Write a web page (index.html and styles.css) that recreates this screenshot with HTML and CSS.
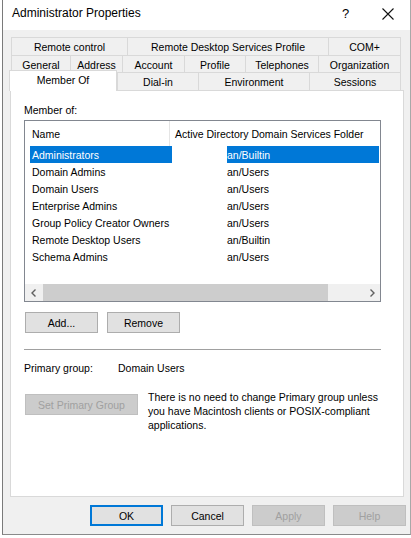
FILE: index.html
```html
<!DOCTYPE html>
<html lang="en">
<head>
    <meta charset="UTF-8">
    <title>Administrator Properties</title>
    <link rel="stylesheet" href="styles.css">
</head>
<body>
    <div class="window">
        <div class="titlebar">
            <span class="title">Administrator Properties</span>
            <span class="help">?</span>
            <span class="close">
                <svg width="12" height="12" viewBox="0 0 12 12"><path d="M0.5 0.5 L11.5 11.5 M11.5 0.5 L0.5 11.5" stroke="#111" stroke-width="1.1" fill="none"/></svg>
            </span>
        </div>

        <div class="tabs">
            <div class="tab-row row1">
                <div class="tab">Remote control</div>
                <div class="tab">Remote Desktop Services Profile</div>
                <div class="tab">COM+</div>
            </div>
            <div class="tab-row row2">
                <div class="tab">General</div>
                <div class="tab">Address</div>
                <div class="tab">Account</div>
                <div class="tab">Profile</div>
                <div class="tab">Telephones</div>
                <div class="tab">Organization</div>
            </div>
            <div class="tab-row row3">
                <div class="tab active">Member Of</div>
                <div class="tab">Dial-in</div>
                <div class="tab">Environment</div>
                <div class="tab">Sessions</div>
            </div>
        </div>

        <div class="panel">
            <div class="label">Member of:</div>
            <div class="listview">
                <div class="lv-header">
                    <div class="lv-col name-col">Name</div>
                    <div class="lv-col">Active Directory Domain Services Folder</div>
                </div>
                <div class="lv-rows">
                    <div class="lv-row selected"><span class="cell-name">Administrators</span><span class="cell-folder"><span class="redact"></span>an/Builtin</span></div>
                    <div class="lv-row"><span class="cell-name">Domain Admins</span><span class="cell-folder"><span class="redact"></span>an/Users</span></div>
                    <div class="lv-row"><span class="cell-name">Domain Users</span><span class="cell-folder"><span class="redact"></span>an/Users</span></div>
                    <div class="lv-row"><span class="cell-name">Enterprise Admins</span><span class="cell-folder"><span class="redact"></span>an/Users</span></div>
                    <div class="lv-row"><span class="cell-name">Group Policy Creator Owners</span><span class="cell-folder"><span class="redact"></span>an/Users</span></div>
                    <div class="lv-row"><span class="cell-name">Remote Desktop Users</span><span class="cell-folder"><span class="redact"></span>an/Builtin</span></div>
                    <div class="lv-row"><span class="cell-name">Schema Admins</span><span class="cell-folder"><span class="redact"></span>an/Users</span></div>
                </div>
                <div class="lv-fill"></div>
                <div class="hscroll">
                    <div class="sb-arrow">
                        <svg width="6" height="8" viewBox="0 0 6 8"><path d="M4.5 0.5 L1 4 L4.5 7.5" stroke="#606060" stroke-width="1.4" fill="none"/></svg>
                    </div>
                    <div class="sb-thumb"></div>
                    <div class="sb-track"></div>
                    <div class="sb-arrow">
                        <svg width="6" height="8" viewBox="0 0 6 8"><path d="M1.5 0.5 L5 4 L1.5 7.5" stroke="#606060" stroke-width="1.4" fill="none"/></svg>
                    </div>
                </div>
            </div>

            <div class="btn-row">
                <button class="btn first">Add...</button>
                <button class="btn">Remove</button>
            </div>

            <div class="separator"></div>

            <div class="primary-row">
                <span class="primary-label">Primary group:</span>
                <span>Domain Users</span>
            </div>

            <div class="set-row">
                <button class="btn wide" disabled>Set Primary Group</button>
                <p class="note">There is no need to change Primary group unless<br>you have Macintosh clients or POSIX-compliant<br>applications.</p>
            </div>
        </div>

        <div class="dialog-buttons">
            <button class="btn default">OK</button>
            <button class="btn">Cancel</button>
            <button class="btn" disabled>Apply</button>
            <button class="btn" disabled>Help</button>
        </div>
    </div>
</body>
</html>
```

FILE: styles.css
```css
* {
    box-sizing: border-box;
}
body {
    margin: 0;
    background: #fff;
    font-family: "Liberation Sans", Arial, sans-serif;
    font-size: 10.5px;
    color: #000;
}
.window {
    margin-left: 2px;
    width: 409px;
    height: 535px;
    background: #f0f0f0;
    border-left: 1px solid #7a7a7a;
    border-right: 1px solid #a8a8a8;
    border-bottom: 1px solid #8a8a8a;
}
.titlebar {
    height: 30px;
    background: #fff;
    display: flex;
    align-items: center;
    padding-left: 9px;
    padding-bottom: 4px;
}
.title {
    font-size: 12px;
    flex: 1;
}
.help {
    font-size: 13px;
    width: 40px;
}
.close {
    width: 12px;
    margin-right: 16px;
    display: flex;
    padding-top: 1px;
}

/* tabs */
.tabs {
    margin: 7px 0 0 8px;
}
.tab-row {
    display: grid;
    height: 18px;
}
.row1 {
    grid-template-columns: 116px 201px 73px;
}
.row2 {
    height: 17px;
    grid-template-columns: 59px 52px 62px 61px 73px 83px;
}
.row3 {
    grid-template-columns: 106px 81px 111px 92px;
}
.tab {
    border-top: 1px solid #d9d9d9;
    border-left: 1px solid #d9d9d9;
    display: flex;
    align-items: center;
    justify-content: center;
    white-space: nowrap;
    padding-top: 1px;
}
.tab:last-child {
    border-right: 1px solid #d9d9d9;
}
.tab.active {
    position: relative;
    z-index: 1;
    margin: -2px 0 -1px -2px;
    background: #fff;
    border-right: 1px solid #d9d9d9;
    padding-bottom: 4px;
}

/* panel */
.panel {
    margin-left: 7px;
    width: 394px;
    height: 407px;
    background: #fff;
    border: 1px solid #d9d9d9;
    padding: 12px 0 0 13px;
}
.label {
    line-height: 15px;
}
.listview {
    margin-top: 2px;
    width: 357px;
    height: 182px;
    border: 1px solid #828790;
    display: flex;
    flex-direction: column;
}
.lv-header {
    display: flex;
    height: 25px;
}
.lv-col {
    display: flex;
    align-items: center;
    padding-left: 5px;
    white-space: nowrap;
}
.lv-col.name-col {
    width: 145px;
    padding-left: 7px;
    border-right: 1px solid #e5e5e5;
}
.lv-rows {
    padding: 0 1px 0 5px;
}
.lv-row {
    display: flex;
    height: 17px;
    align-items: center;
    white-space: nowrap;
}
.lv-row.selected {
    background: #0078d7;
    color: #fff;
}
.cell-name {
    width: 142px;
    padding-left: 2px;
}
.cell-folder {
    display: flex;
    align-items: center;
    height: 100%;
}
.redact {
    width: 55px;
    height: 100%;
    background: #fff;
}
.lv-fill {
    flex: 1;
}
.hscroll {
    height: 17px;
    display: flex;
    background: #f0f0f0;
}
.sb-arrow {
    width: 17px;
    display: flex;
    align-items: center;
    justify-content: center;
}
.sb-thumb {
    width: 285px;
    margin-left: 1px;
    background: #cdcdcd;
}
.sb-track {
    flex: 1;
}

/* buttons */
.btn {
    font-family: inherit;
    font-size: 10.5px;
    width: 73px;
    height: 21px;
    padding: 0;
    background: #e1e1e1;
    border: 1px solid #adadad;
    color: #000;
}
.btn:disabled {
    background: #cccccc;
    border-color: #bfbfbf;
    color: #a0a0a0;
}
.btn.default {
    border: 2px solid #0078d7;
}
.btn.wide {
    width: 113px;
}
.btn-row {
    display: flex;
    gap: 9px;
    margin-top: 10px;
}
.btn-row .first {
    margin-left: 1px;
}
.separator {
    margin-top: 16px;
    width: 357px;
    height: 1px;
    background: #a0a0a0;
}
.primary-row {
    margin-top: 11px;
    line-height: 15px;
    display: flex;
}
.primary-label {
    width: 94px;
}
.set-row {
    display: flex;
    align-items: flex-start;
    margin-top: 14px;
}
.set-row .btn {
    margin: 4px 0 0 1px;
}
.note {
    margin: 0 0 0 10px;
    line-height: 14px;
}
.dialog-buttons {
    display: flex;
    justify-content: flex-end;
    gap: 8px;
    margin-top: 8px;
    padding-right: 4px;
}
```
